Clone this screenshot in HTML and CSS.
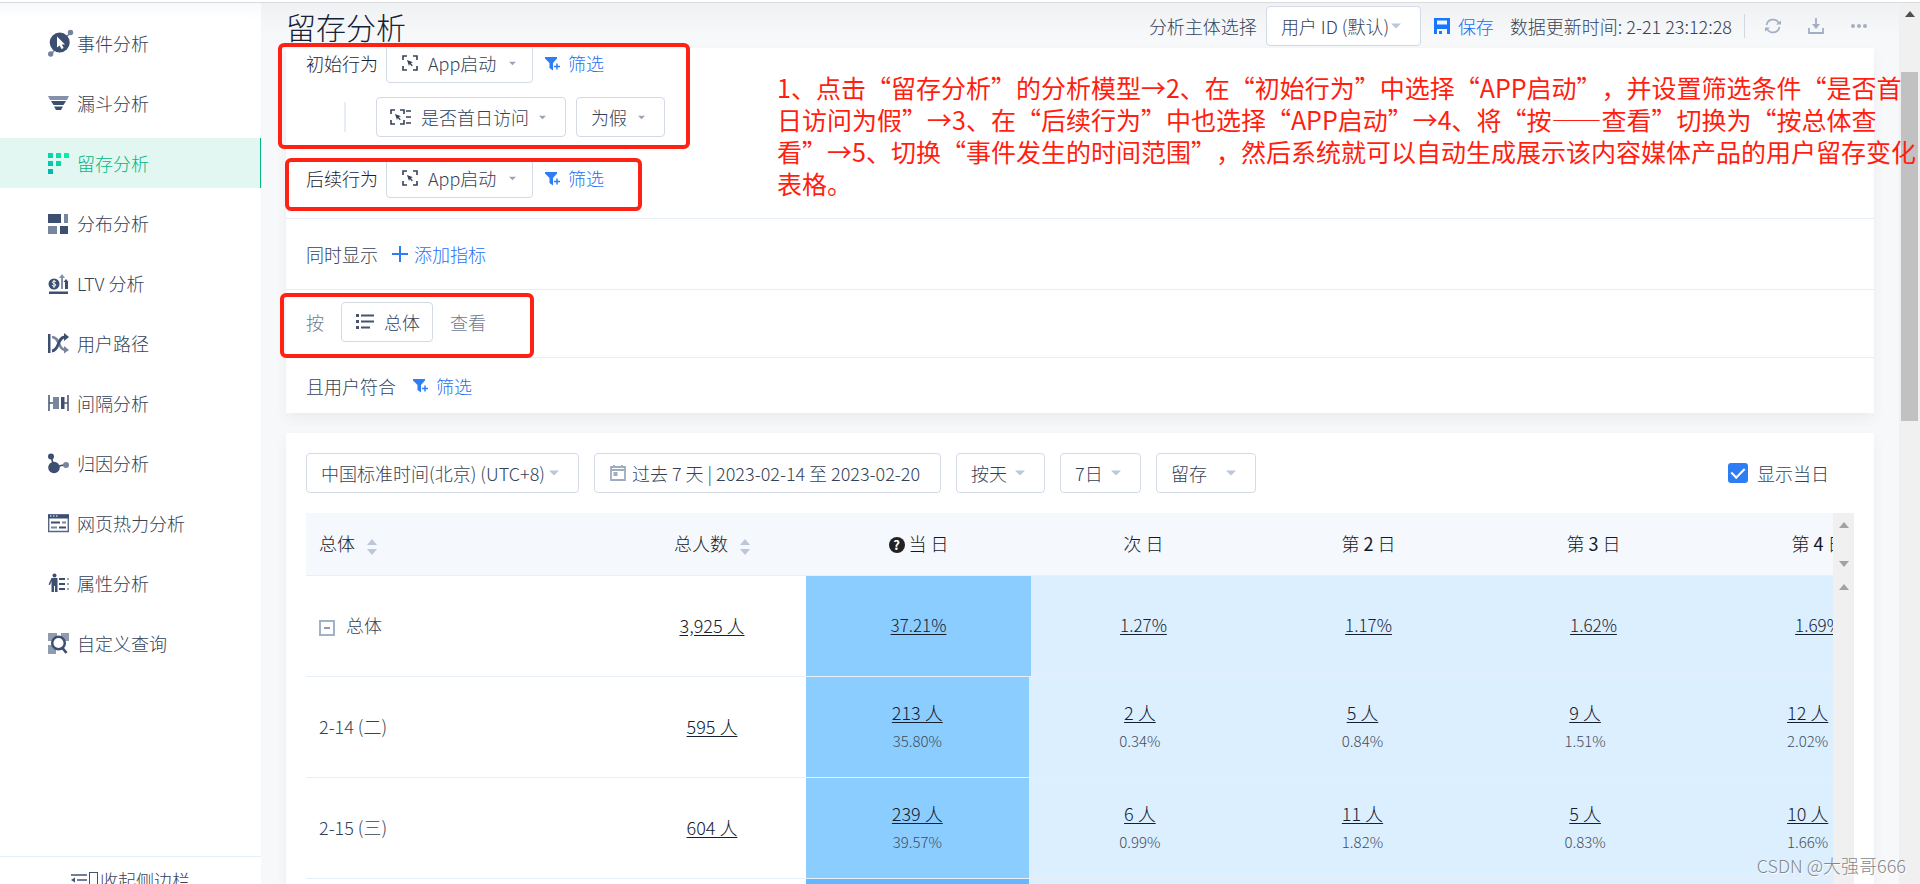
FILE: index.html
```html
<!DOCTYPE html>
<html lang="zh-CN">
<head>
<meta charset="utf-8">
<title>留存分析</title>
<link rel="stylesheet" href="styles.css">
</head>
<body>
<svg class="defs" aria-hidden="true">
  <symbol id="caret" viewBox="0 0 10 6"><path d="M0 .5h10L5 5.5z" fill="currentColor"/></symbol>
  <symbol id="event" viewBox="0 0 16 16"><path d="M1 5V1h4M11 1h4v4M15 11v4h-4M5 15H1v-4" fill="none" stroke="currentColor" stroke-width="1.6"/><path d="M5 5l6 2.200-2.200.9 2 2.200-1 .9-2-2.200L7 11z" fill="currentColor"/></symbol>
  <symbol id="prop" viewBox="0 0 22 16"><path d="M1 5V1h4M10 1h4v4M14 11v4h-4M5 15H1v-4M16 2h5M16 8h5M16 14h5" fill="none" stroke="currentColor" stroke-width="1.600"/><path d="M5 5l6 2.200-2.200.9 2 2.200-1 .9-2-2.200L7 11z" fill="currentColor"/></symbol>
  <symbol id="filter" viewBox="0 0 15 15"><path d="M0 1h12v1.500L8 7v7.500L4.500 12V7L0 2.500z" fill="currentColor"/><path d="M12 7.500v6M9 10.500h6" stroke="currentColor" stroke-width="1.500"/></symbol>
</svg>
<div class="app">
  <nav class="sidebar" aria-label="分析模型">
    <ul class="menu">
      <li><a href="#event"><svg class="ico wide" viewBox="0 0 26 28"><g fill="#74839c"><circle cx="22.500" cy="3.500" r="2.700"/><circle cx="2.700" cy="25" r="2.700"/></g><path d="M22 4L3 25" stroke="#74839c" stroke-width="1.500"/><circle cx="11.700" cy="13.500" r="10" fill="#3d4f71"/><path d="M9 7.500l8 8h-3.200l1.900 3.400-2.200 1.200-1.900-3.500L9 18.500z" fill="#fff"/></svg>事件分析</a></li>
      <li><a href="#funnel"><svg class="ico" viewBox="0 0 21 21"><path d="M0 3h21l-2 4H2z" fill="#8491a8"/><path d="M3 8h15l-2.500 4h-10zM6 13.500h9L13 17H8z" fill="#3d4f71"/></svg>漏斗分析</a></li>
      <li class="active"><a href="#retention" aria-current="page"><svg class="ico" viewBox="0 0 21 21"><defs><linearGradient id="g" x1="0" y1="1" x2="1" y2="0"><stop offset="0" stop-color="#00b2b0"/><stop offset="1" stop-color="#0cf5a2"/></linearGradient></defs><path d="M0 0h5v5H0zM8 0h5v5H8zM16 0h5v5h-5zM0 8h5v5H0zM8 8h5v5H8zM0 16h5v5H0z" fill="url(#g)"/></svg>留存分析</a></li>
      <li><a href="#spread"><svg class="ico" viewBox="0 0 21 21"><path d="M0 1h13v9H0zM12 13h8v8h-8z" fill="#3d4f71"/><path d="M16 1h4v9h-4zM0 13h9v8H0z" fill="#77859d"/></svg>分布分析</a></li>
      <li><a href="#ltv"><svg class="ico" viewBox="0 0 21 21"><circle cx="6" cy="11" r="5.500" fill="#3d4f71"/><path d="M8 9c-.5-1.300-3.800-1.200-3.600.4.200 1.700 3.500.9 3.500 2.700-.1 1.500-3.200 1.500-3.900 0M6 7v8" fill="none" stroke="#fff" stroke-width="1"/><path d="M1 18.500h19V21H1zM17 16V9h-1.500L18 6l2.500 3H20v7z" fill="#3d4f71"/><path d="M13 16V5h-2l3-4 3 4h-2v11z" fill="#8491a8"/></svg>LTV 分析</a></li>
      <li><a href="#path"><svg class="ico" viewBox="0 0 21 21"><path d="M0 1h2.500v19H0z" fill="#3d4f71"/><path d="M4 4c8 0 6 13 13 13" fill="none" stroke="#77859d" stroke-width="2.600"/><path d="M16 13l5 4-5 3.500z" fill="#77859d"/><path d="M4 18c8-1 5-14 13-14" fill="none" stroke="#3d4f71" stroke-width="2.800"/><path d="M16 0l5 4-5 4z" fill="#3d4f71"/></svg>用户路径</a></li>
      <li><a href="#interval"><svg class="ico" viewBox="0 0 21 21"><path d="M1 2v16M20 2v16M1 10h4M16 10h4" stroke="#4b5c7b" stroke-width="1.600"/><path d="M5 4h6v12H5z" fill="#77859d"/><path d="M13 4h3.500v12H13z" fill="#3d4f71"/></svg>间隔分析</a></li>
      <li><a href="#attribution"><svg class="ico" viewBox="0 0 21 21"><path d="M3 3l3 11 12-2.500" fill="none" stroke="#3d4f71" stroke-width="1.600"/><circle cx="3" cy="3.500" r="3" fill="#3d4f71"/><circle cx="6" cy="14.500" r="5.800" fill="#3d4f71"/><circle cx="18" cy="12" r="3" fill="#77859d"/></svg>归因分析</a></li>
      <li><a href="#heat"><svg class="ico" viewBox="0 0 21 21"><path d="M.7 2h19.600v16.500H.7z" fill="#fff" stroke="#566683" stroke-width="1.400"/><path d="M0 1.500h21v4H0zM3 8.500h9v2H3zM11 13.500h7v2h-7z" fill="#3d4f71"/><path d="M14 8.500h4v2h-4zM3 13.500h6v2H3z" fill="#77859d"/><path d="M2 3h1.500M5 3h1.500M8 3h1.500" stroke="#fff"/></svg>网页热力分析</a></li>
      <li><a href="#attr"><svg class="ico" viewBox="0 0 21 21"><circle cx="6.500" cy="2.500" r="2" fill="#3d4f71"/><path d="M3.500 5h6v14H7v-6h-1v6H3.500V8L2 12 .5 11.500z" fill="#3d4f71"/><path d="M11 6h6M11 11h6M11 16h6" stroke="#3d4f71" stroke-width="2"/><path d="M19 6h2M19 11h2M19 16h2" stroke="#9aa6b8" stroke-width="2"/></svg>属性分析</a></li>
      <li><a href="#custom"><svg class="ico" viewBox="0 0 21 21"><path d="M0 0h9v8H0zM13 0h8v8h-8zM0 12h8v9H0z" fill="#8e9bb0"/><circle cx="10.500" cy="10" r="6.300" fill="#fff" stroke="#3d4f71" stroke-width="2.500"/><path d="M14.500 15l4 5" stroke="#3d4f71" stroke-width="2.700"/></svg>自定义查询</a></li>
    </ul>
    <button class="collapse" type="button"><svg class="ico16" viewBox="0 0 16 16"><path d="M0 3h16M6 8h10M0 13h16" stroke="#45546f" stroke-width="1.600"/><path d="M4 5.500v5L0 8z" fill="#45546f"/></svg><span class="missing"></span>收起侧边栏</button>
  </nav>

  <main class="main">
    <header class="head">
      <h1>留存分析</h1>
      <div class="tools">
        <label for="subject">分析主体选择</label>
        <span class="pick w-subject"><select id="subject"><option>用户 ID (默认)</option></select><svg class="caret"><use href="#caret"/></svg></span>
        <button class="save" type="button"><svg class="ico18" viewBox="0 0 18 18"><path d="M1 1h16v16h-3v-5H4v5H1zM4 3.500v4h10v-4z" fill="#1677ff" fill-rule="evenodd"/><path d="M6 14h3v3H6z" fill="#1677ff"/></svg>保存</button>
        <span class="updated">数据更新时间: 2-21 23:12:28</span>
        <span class="bar"></span>
        <button class="tool" type="button" aria-label="刷新"><svg class="ico16" viewBox="0 0 16 16"><path d="M1.500 7A6.600 6.600 0 0 1 14 5.500M14.500 9A6.600 6.600 0 0 1 2 10.500" fill="none" stroke="#a3afc3" stroke-width="1.700"/><path d="M11 6.500h5V2.500zM5 9.500H0v4z" fill="#a3afc3"/></svg></button>
        <button class="tool" type="button" aria-label="下载"><svg class="ico16" viewBox="0 0 16 16"><path d="M1 10v5h14v-5M8 0v8" fill="none" stroke="#a3afc3" stroke-width="1.800"/><path d="M4 6h8l-4 5z" fill="#a3afc3"/></svg></button>
        <button class="tool" type="button" aria-label="更多"><svg class="ico16" viewBox="0 0 16 16"><g fill="#a3afc3"><circle cx="2" cy="8" r="2"/><circle cx="8" cy="8" r="2"/><circle cx="14" cy="8" r="2"/></g></svg></button>
      </div>
    </header>

    <section class="card query">
      <div class="block behaviours">
        <div class="row">
          <span class="strong">初始行为</span>
          <span class="pick w-event"><svg class="ico16"><use href="#event"/></svg><select aria-label="初始行为"><option>App启动</option></select><svg class="caret small"><use href="#caret"/></svg></span>
          <button class="link" type="button"><svg class="ico15"><use href="#filter"/></svg>筛选</button>
        </div>
        <div class="row sub">
          <span class="pick w-prop"><svg class="prop"><use href="#prop"/></svg><select aria-label="属性"><option>是否首日访问</option></select><svg class="caret small"><use href="#caret"/></svg></span>
          <span class="pick w-89"><select aria-label="条件"><option>为假</option></select><svg class="caret small"><use href="#caret"/></svg></span>
        </div>
        <div class="row later">
          <span class="strong">后续行为</span>
          <span class="pick w-event"><svg class="ico16"><use href="#event"/></svg><select aria-label="后续行为"><option>App启动</option></select><svg class="caret small"><use href="#caret"/></svg></span>
          <button class="link" type="button"><svg class="ico15"><use href="#filter"/></svg>筛选</button>
        </div>
      </div>
      <div class="block metric">
        <span>同时显示</span>
        <button class="link add" type="button"><svg class="ico16" viewBox="0 0 16 16"><path d="M8 0v16M0 8h16" stroke="#2f7df4" stroke-width="2"/></svg>添加指标</button>
      </div>
      <div class="block group">
        <span class="muted">按</span>
        <button class="pick total" type="button"><svg class="ico18" viewBox="0 0 18 16"><path d="M0 0h3v3H0zM0 6h3v3H0zM0 12h3v3H0z" fill="#45546a"/><path d="M5 1.500h13M5 7.500h13M5 13.500h9" stroke="#45546a" stroke-width="1.800"/></svg>总体</button>
        <span class="muted">查看</span>
      </div>
      <div class="block users">
        <span>且用户符合</span>
        <button class="link" type="button"><svg class="ico15"><use href="#filter"/></svg>筛选</button>
      </div>
    </section>

    <section class="card result">
      <div class="filters">
        <span class="pick w-zone"><select aria-label="时区"><option>中国标准时间(北京) (UTC+8)</option></select><svg class="caret"><use href="#caret"/></svg></span>
        <button class="pick date" type="button"><svg class="ico16" viewBox="0 0 16 16"><path d="M1 2h14v13H1zM1 5h14M4 0v3M12 0v3" fill="none" stroke="#9eabc1" stroke-width="1.800"/><path d="M3.500 7h4v4h-4z" fill="#9eabc1"/></svg>过去 7 天 | 2023-02-14 至 2023-02-20</button>
        <span class="pick w-89"><select aria-label="粒度"><option>按天</option></select><svg class="caret"><use href="#caret"/></svg></span>
        <span class="pick w-81"><select aria-label="周期"><option>7日</option></select><svg class="caret"><use href="#caret"/></svg></span>
        <span class="pick w-100"><select aria-label="类型"><option>留存</option></select><svg class="caret"><use href="#caret"/></svg></span>
        <label class="check"><input type="checkbox" checked>显示当日</label>
      </div>
      <div class="grid">
        <div class="tables">
          <table class="summary">
            <colgroup><col class="c-name"><col class="c-count"><col><col><col><col><col></colgroup>
            <thead><tr>
              <th scope="col">总体<svg class="sort" viewBox="0 0 10 16"><path d="M0 6l5-6 5 6zM0 10h10l-5 6z" fill="#bcc7d9"/></svg></th>
              <th scope="col">总人数<svg class="sort" viewBox="0 0 10 16"><path d="M0 6l5-6 5 6zM0 10h10l-5 6z" fill="#bcc7d9"/></svg></th>
              <th scope="col"><span class="help">?</span>当 日</th>
              <th scope="col">次 日</th><th scope="col">第 <b>2</b> 日</th><th scope="col">第 <b>3</b> 日</th><th scope="col">第 <b>4</b> 日</th>
            </tr></thead>
            <tbody><tr>
              <td><button class="fold" type="button" aria-label="收起"></button>总体</td>
              <td><a href="#n">3,925 人</a></td>
              <td class="deep rate"><a href="#n">37.21%</a></td><td class="pale rate"><a href="#n">1.27%</a></td><td class="pale rate"><a href="#n">1.17%</a></td><td class="pale rate"><a href="#n">1.62%</a></td><td class="pale rate"><a href="#n">1.69%</a></td>
            </tr></tbody>
          </table>
          <table class="detail">
            <colgroup><col class="c-name"><col class="c-count"><col><col><col><col><col></colgroup>
            <tbody>
              <tr><td>2-14 (二)</td><td><a href="#n">595 人</a></td><td class="deep"><a href="#n">213 人</a><small>35.80%</small></td><td class="pale"><a href="#n">2 人</a><small>0.34%</small></td><td class="pale"><a href="#n">5 人</a><small>0.84%</small></td><td class="pale"><a href="#n">9 人</a><small>1.51%</small></td><td class="pale"><a href="#n">12 人</a><small>2.02%</small></td></tr>
              <tr><td>2-15 (三)</td><td><a href="#n">604 人</a></td><td class="deep"><a href="#n">239 人</a><small>39.57%</small></td><td class="pale"><a href="#n">6 人</a><small>0.99%</small></td><td class="pale"><a href="#n">11 人</a><small>1.82%</small></td><td class="pale"><a href="#n">5 人</a><small>0.83%</small></td><td class="pale"><a href="#n">10 人</a><small>1.66%</small></td></tr>
              <tr><td></td><td></td><td class="deeper"></td><td class="pale"></td><td class="pale"></td><td class="pale"></td><td class="pale"></td></tr>
            </tbody>
          </table>
        </div>
        <div class="rail inner" aria-hidden="true">
          <div class="rail-head"><svg class="arrow" viewBox="0 0 10 6"><path d="M0 6l5-6 5 6z" fill="#a3a3a3"/></svg><svg class="arrow" viewBox="0 0 10 6"><path d="M0 0h10L5 6z" fill="#a3a3a3"/></svg></div>
          <svg class="arrow" viewBox="0 0 10 6"><path d="M0 6l5-6 5 6z" fill="#a3a3a3"/></svg>
        </div>
      </div>
    </section>
  </main>
  <div class="rail outer" aria-hidden="true"><svg class="arrow" viewBox="0 0 10 6"><path d="M0 6l5-6 5 6z" fill="#505050"/></svg><div class="thumb"></div></div>
</div>

<div class="mark mark-first"></div>
<div class="mark mark-later"></div>
<div class="mark mark-group"></div>
<p class="note">1、点击“留存分析”的分析模型→2、在“初始行为”中选择“APP启动”，并设置筛选条件“是否首<br>日访问为假”→3、在“后续行为”中也选择“APP启动”→4、将“按——查看”切换为“按总体查<br>看”→5、切换“事件发生的时间范围”，然后系统就可以自动生成展示该内容媒体产品的用户留存变化<br>表格。</p>
<p class="watermark">CSDN @大强哥666</p>
</body>
</html>
```

FILE: styles.css
```css
* { box-sizing: border-box; }
html, body { height: 100%; margin: 0; overflow: hidden; }
body {
  position: relative;
  border-top: 2px solid #fff;
  background: #f7f8fa;
  color: #344258;
  font: 300 18px/24px "Noto Sans CJK SC", "Noto Sans", sans-serif;
  text-spacing-trim: space-all;
}
button, select, input { margin: 0; padding: 0; border: 0; background: none; color: inherit; font: inherit; }
svg { display: block; flex: none; }
p, h1, ul { margin: 0; padding: 0; }
.defs { position: absolute; width: 0; height: 0; }
.ico { width: 21px; height: 21px; }
.ico16 { width: 16px; height: 16px; }
.ico15 { width: 15px; height: 15px; }
.ico18 { width: 18px; height: 18px; }
.prop { width: 22px; height: 16px; }

.app { display: flex; height: 100%; border-top: 1px solid #d9dbde; }

/* Sidebar */
.sidebar { display: flex; flex: none; flex-direction: column; width: 261px; background: #fff linear-gradient(#f8f9fa, #fff 16px); }
.menu { display: grid; flex: 1; align-content: start; gap: 10px; padding-top: 15px; list-style: none; }
.menu a { display: flex; align-items: center; gap: 8px; height: 50px; padding-left: 48px; color: #344258; text-decoration: none; }
.menu .wide { width: 26px; height: 28px; margin-right: -5px; }
.menu .active a { border-right: 1px solid #00b884; background: #e3f7f2; color: #00b884; }
.collapse { display: flex; flex: none; align-items: center; justify-content: center; width: 100%; height: 48px; margin-bottom: -20px; padding-bottom: 2px; border-top: 1px solid #e6eef8; }
.missing { width: 9px; height: 16px; margin: 0 2px; border: 1px solid #45536a; }

/* Header */
.main { display: flex; flex: 1; flex-direction: column; min-width: 0; padding: 0 25px; background: linear-gradient(#eff1f3, #f7f8fa 32px); }
.head { display: flex; flex: none; align-items: center; justify-content: space-between; height: 45px; }
h1 { color: #182236; font-size: 30px; font-weight: 300; line-height: 44px; }
.tools { display: flex; align-items: center; padding-right: 7px; }
.tools .pick { margin: 0 12px 0 9px; }
.save { display: flex; align-items: center; gap: 7px; margin-right: 16px; color: #1070f5; }
.bar { width: 1px; height: 24px; margin: 0 20px 0 12px; background: #d3d8df; }
.tool + .tool { margin-left: 27px; }

/* Form parts */
.pick { display: inline-flex; flex: none; align-items: center; height: 40px; padding: 0 19px 0 14px; border: 1px solid #d3dae6; border-radius: 4px; background: #fff; white-space: nowrap; }
.pick select { flex: 1; min-width: 0; height: 38px; appearance: none; outline: 0; }
.caret { width: 10px; height: 6px; color: #bcc7d9; }
.caret.small { width: 7px; height: 5px; color: #98a6bd; }
.w-subject { width: 155px; }
.w-event { width: 147px; gap: 10px; padding-right: 16px; padding-left: 15px; }
.w-event select { flex-basis: 72px; }
.w-prop { width: 190px; gap: 9px; padding-left: 13px; }
.w-zone { width: 273px; }
.w-89 { width: 89px; }
.w-81 { width: 81px; }
.w-100 { width: 100px; }
.date { gap: 6px; width: 347px; padding-right: 0; padding-left: 15px; }
.link { display: inline-flex; align-items: center; gap: 8px; color: #1f70f2; }
.link svg { color: #2f7df4; }

/* Query card */
.card { flex: none; background: #fff; box-shadow: 0 6px 12px rgba(40, 60, 90, .06); }
.query { overflow: hidden; }
.block { display: flex; align-items: center; padding: 0 20px; border-bottom: 1px solid #e6edf7; }
.block:last-child { border-bottom: 0; }
.behaviours { display: block; padding-bottom: 20px; }
.row { display: flex; align-items: center; height: 40px; }
.row:first-child { margin-top: -5px; }
.row .strong { margin-right: 8px; color: #182236; }
.row .link { margin-left: 12px; }
.sub { gap: 10px; margin: 14px 0 21px; padding-left: 38px; }
.sub::before { width: 2px; height: 30px; margin-right: 20px; background: #e6edf7; content: ""; }
.metric { gap: 14px; height: 71px; }
.add { gap: 6px; }
.group { gap: 17px; height: 68px; padding-bottom: 3px; }
.total { gap: 10px; padding: 0 12px 0 14px; }
.muted { color: #6b7b94; }
.users { gap: 17px; height: 55px; }

/* Result card */
.result { display: flex; flex: 1; flex-direction: column; min-height: 0; margin-top: 20px; padding: 20px 20px 0; }
.filters { display: flex; align-items: center; gap: 15px; margin-bottom: 20px; }
.check { display: flex; align-items: center; gap: 9px; margin: 0 25px 0 auto; }
.check input { display: grid; width: 20px; height: 20px; border-radius: 3px; background: #2f7df4; appearance: none; place-items: center; }
.check input::before { width: 6px; height: 11px; margin-bottom: 3px; border: solid #fff; border-width: 0 2px 2px 0; content: ""; transform: rotate(45deg); }
.grid { display: flex; flex: 1; min-height: 0; }
.tables { flex: 1; min-width: 0; overflow: hidden; }
table { table-layout: fixed; border-collapse: separate; border-spacing: 0; }
.summary { width: 1625px; }
.detail { width: 1613px; }
.c-name { width: 312px; }
.c-count { width: 188px; }
th, td { padding: 0; border-bottom: 1px solid #e6eef8; text-align: center; white-space: nowrap; }
th { height: 63px; padding-bottom: 2px; background: #f5f8fd; color: #14181f; font-weight: 300; }
th b { font-weight: 400; }
td { height: 101px; padding-bottom: 2px; }
.summary td { padding-bottom: 3px; }
th:first-child, td:first-child { padding-left: 13px; text-align: left; }
td a { color: #14202f; text-underline-offset: 2px; }
td small { display: block; margin-top: 5px; color: #3f4d5c; font-size: 15px; line-height: 24px; }
.rate { font-size: 17px; }
.sort { display: inline-block; width: 10px; height: 16px; margin-left: 12px; vertical-align: -4px; }
.help { display: inline-block; width: 16px; height: 16px; margin-right: 4px; border-radius: 50%; background: #222; color: #fff; font-size: 13px; font-weight: 700; line-height: 16px; vertical-align: 1px; }
.fold { width: 16px; height: 16px; margin-right: 11px; border: 2px solid #a3b1c6; vertical-align: -1px; }
.fold::before { display: block; width: 6px; height: 2px; margin: 0 auto; background: #8b9bb3; content: ""; }
.deep { background: #8bcdff; }
.deeper { background: #63b8ff; }
.pale { background: #dcefff; }

/* Scroll rails */
.rail { display: flex; flex: none; flex-direction: column; align-items: center; width: 21px; background: #f0f0f0; }
.arrow { width: 10px; height: 6px; }
.rail-head { display: flex; flex-direction: column; justify-content: space-between; height: 63px; padding: 9px 0; margin-bottom: 8px; }
.outer { padding-top: 8px; }
.thumb { width: 17px; height: 40%; margin-top: 55px; background: #c1c1c1; }

/* Annotations over the page */
.mark { position: absolute; border: 4px solid #ff2214; border-radius: 6px; }
.mark-first { top: 41px; left: 278px; width: 412px; height: 106px; }
.mark-later { top: 156px; left: 285px; width: 357px; height: 53px; }
.mark-group { top: 291px; left: 280px; width: 254px; height: 65px; }
.note { position: absolute; top: 69px; left: 777px; color: #ff1e10; font-size: 25px; font-weight: 400; line-height: 32px; white-space: nowrap; }
.watermark { position: absolute; right: 14px; bottom: 5px; color: #85888c; font-size: 18px; line-height: 28px; text-shadow: 1px 1px 1px #fff; }
```
